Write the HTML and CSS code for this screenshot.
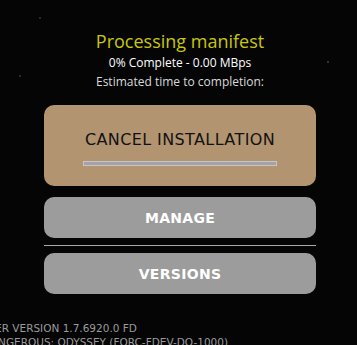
FILE: index.html
```html
<!DOCTYPE html>
<html lang="en">
<head>
  <meta charset="UTF-8">
  <meta name="viewport" content="width=device-width, initial-scale=1.0">
  <title>Launcher - Installing</title>
  <link rel="stylesheet" href="styles.css">
</head>
<body>
  <div class="panel">
    <div class="status">
      <h1>Processing manifest</h1>
      <p class="rate">0% Complete - 0.00 MBps</p>
      <p class="eta">Estimated time to completion:</p>
    </div>

    <button class="cancel">
      <span>CANCEL INSTALLATION</span>
      <div class="progress"><div class="progress-fill" style="width: 0%;"></div></div>
    </button>

    <button class="grey-btn">MANAGE</button>
    <hr class="divider">
    <button class="grey-btn">VERSIONS</button>
  </div>

  <div class="footer">
    <p>LAUNCHER VERSION 1.7.6920.0 FD</p>
    <p>ELITE DANGEROUS: ODYSSEY (FORC-FDEV-DO-1000)</p>
  </div>
</body>
</html>
```

FILE: styles.css
```css
body {
  margin: 0;
  padding: 0;
  height: 345px;
  overflow: hidden;
  background-color: #050505;
  background-image:
    radial-gradient(circle at 142px 292px, #4a4a5a 0, #4a4a5a 1px, transparent 1.5px),
    radial-gradient(circle at 40px 18px, #2a2a2a 0, #2a2a2a 0.8px, transparent 1.2px),
    radial-gradient(circle at 328px 62px, #333 0, #333 0.8px, transparent 1.2px),
    radial-gradient(circle at 20px 76px, #2a2a2a 0, #2a2a2a 0.8px, transparent 1.2px);
  font-family: "Open Sans", sans-serif;
}

.panel {
  width: 272px;
  margin-left: 44px;
  padding-top: 29px;
}

.status {
  text-align: center;
}

.status h1 {
  margin: 0;
  font-size: 18px;
  font-weight: 400;
  line-height: 24px;
  color: #c9c70a;
}

.status p {
  margin: 0;
  font-size: 12px;
  line-height: 19px;
}

.rate {
  color: #ffffff;
}

.eta {
  color: #d9d9d9;
}

button {
  display: block;
  width: 100%;
  border: none;
  padding: 0;
  font-family: "DejaVu Sans", sans-serif;
  cursor: pointer;
}

.cancel {
  margin-top: 14px;
  height: 81px;
  border-radius: 10px;
  background: #b39470;
  color: #111;
  display: flex;
  flex-direction: column;
  align-items: center;
  justify-content: flex-start;
}

.cancel span {
  margin-top: 25px;
  font-size: 16px;
  letter-spacing: 0.4px;
}

.progress {
  margin-top: 12px;
  width: 192px;
  height: 3px;
  border: 1px solid #c9c6c2;
  background: #a2a2a8;
}

.progress-fill {
  height: 100%;
  background: #e0c060;
}

.grey-btn {
  height: 41px;
  border-radius: 10px;
  background: #9c9c9c;
  color: #fff;
  font-size: 14px;
  font-weight: 700;
  letter-spacing: 0.3px;
}

.cancel + .grey-btn {
  margin-top: 11px;
}

.divider {
  margin: 7px 0 7px;
  border: none;
  border-top: 1px solid #a8a8a8;
}

.footer {
  margin-top: 27px;
  margin-left: -49px;
  color: #9a9a9a;
  font-family: "DejaVu Sans", sans-serif;
  font-size: 10.5px;
  white-space: nowrap;
}

.footer p {
  margin: 0;
  line-height: 14px;
}
```
